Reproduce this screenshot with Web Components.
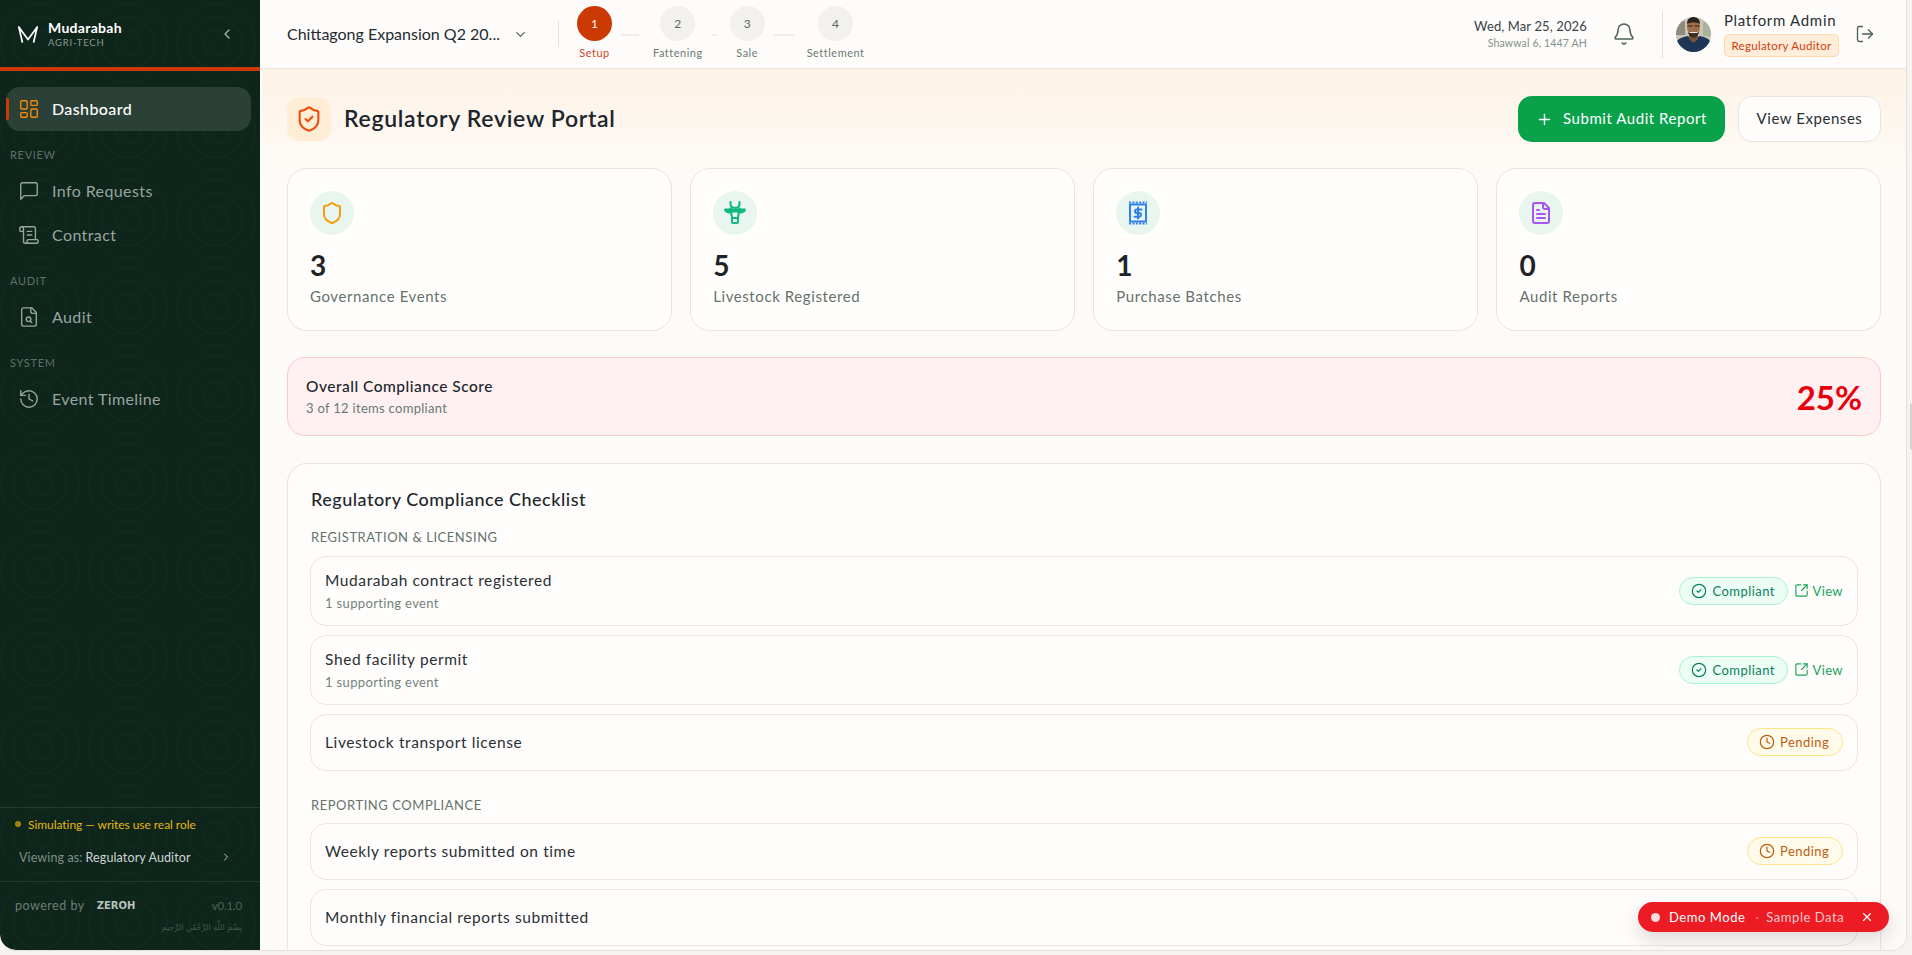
<!DOCTYPE html>
<html lang="en">
<head>
<meta charset="utf-8">
<title>Regulatory Review Portal</title>
<style>
  html, body { margin: 0; height: 100%; overflow: hidden; }
  body {
    background: #f4f3ef;
    font-family: "Lato", "Noto Sans", sans-serif;
    color: #1e2329;
  }
</style>
</head>
<body>
<app-shell>
  <side-bar slot="side"></side-bar>
  <top-bar slot="top"></top-bar>
  <page-head></page-head>
  <stat-row>
    <stat-card icon="shield" tone="#f59e0b" value="3">Governance Events</stat-card>
    <stat-card icon="cow" tone="#10b981" value="5">Livestock Registered</stat-card>
    <stat-card icon="receipt" tone="#2f80ed" value="1">Purchase Batches</stat-card>
    <stat-card icon="file-text" tone="#a855f7" value="0">Audit Reports</stat-card>
  </stat-row>
  <score-card value="25%" sub="3 of 12 items compliant">Overall Compliance Score</score-card>
  <check-card heading="Regulatory Compliance Checklist">
    <check-section label="Registration &amp; Licensing">
      <check-item sub="1 supporting event" status="compliant" link>Mudarabah contract registered</check-item>
      <check-item sub="1 supporting event" status="compliant" link>Shed facility permit</check-item>
      <check-item status="pending">Livestock transport license</check-item>
    </check-section>
    <check-section label="Reporting Compliance" class="second">
      <check-item status="pending">Weekly reports submitted on time</check-item>
      <check-item>Monthly financial reports submitted</check-item>
    </check-section>
  </check-card>
  <demo-pill slot="over"></demo-pill>
</app-shell>
<edge-handle></edge-handle>

<script>
const ICONS = {
  dashboard: '<rect x="3" y="3" width="7" height="9" rx="1"/><rect x="14" y="3" width="7" height="5" rx="1"/><rect x="14" y="12" width="7" height="9" rx="1"/><rect x="3" y="16" width="7" height="5" rx="1"/>',
  message: '<path d="M21 15a2 2 0 0 1-2 2H7l-4 4V5a2 2 0 0 1 2-2h14a2 2 0 0 1 2 2z"/>',
  scroll: '<path d="M15 12h-5"/><path d="M15 8h-5"/><path d="M19 17V5a2 2 0 0 0-2-2H4"/><path d="M8 21h12a2 2 0 0 0 2-2v-1a1 1 0 0 0-1-1H11a1 1 0 0 0-1 1v1a2 2 0 1 1-4 0V5a2 2 0 1 0-4 0v2a1 1 0 0 0 1 1h3"/>',
  "file-search": '<path d="M15 2H6a2 2 0 0 0-2 2v16a2 2 0 0 0 2 2h12a2 2 0 0 0 2-2V7z"/><path d="M14 2v4a2 2 0 0 0 2 2h4"/><circle cx="11.500" cy="14.500" r="2.500"/><path d="M13.300 16.300 15 18"/>',
  history: '<path d="M3 12a9 9 0 1 0 9-9 9.750 9.750 0 0 0-6.740 2.740L3 8"/><path d="M3 3v5h5"/><path d="M12 7v5l4 2"/>',
  "chevron-left": '<path d="m15 18-6-6 6-6"/>',
  "chevron-right": '<path d="m9 18 6-6-6-6"/>',
  "chevron-down": '<path d="m6 9 6 6 6-6"/>',
  bell: '<path d="M10.268 21a2 2 0 0 0 3.464 0"/><path d="M3.262 15.326A1 1 0 0 0 4 17h16a1 1 0 0 0 .74-1.673C19.410 13.956 18 12.499 18 8A6 6 0 0 0 6 8c0 4.499-1.411 5.956-2.738 7.326"/>',
  logout: '<path d="M9 21H5a2 2 0 0 1-2-2V5a2 2 0 0 1 2-2h4"/><path d="m16 17 5-5-5-5"/><path d="M21 12H9"/>',
  "shield-check": '<path d="M20 13c0 5-3.500 7.500-7.660 8.950a1 1 0 0 1-.67-.01C7.500 20.500 4 18 4 13V6a1 1 0 0 1 1-1c2 0 4.500-1.200 6.240-2.720a1.170 1.170 0 0 1 1.520 0C14.510 3.810 17 5 19 5a1 1 0 0 1 1 1z"/><path d="m9 12 2 2 4-4"/>',
  shield: '<path d="M20 13c0 5-3.500 7.500-7.660 8.950a1 1 0 0 1-.67-.01C7.500 20.500 4 18 4 13V6a1 1 0 0 1 1-1c2 0 4.500-1.200 6.240-2.720a1.170 1.170 0 0 1 1.520 0C14.510 3.810 17 5 19 5a1 1 0 0 1 1 1z"/>',
  cow: '<path d="M7.500 1c-.4 3.200.8 5.200 3 5.700h3c2.200-.5 3.400-2.500 3-5.700"/><path d="M8 8.500H2c.6 2.300 2.800 3.200 6 3z" fill="currentColor"/><path d="M16 8.500h6c-.6 2.300-2.800 3.200-6 3z" fill="currentColor"/><path d="M7.500 7.500 9 16.500v4a1.500 1.500 0 0 0 1.500 1.500h3a1.500 1.500 0 0 0 1.500-1.500v-4l1.500-9"/><path d="M9 17h6"/><path d="M8.500 9.500h7" stroke-width="4"/>',
  receipt: '<rect x="4" y="3.500" width="16" height="17"/><path d="M3 1.500h18M3 22.500h18" stroke-dasharray="2 1.400" stroke-linecap="butt"/><path d="M15.500 8.500h-4.700a1.800 1.800 0 0 0 0 3.600h2.400a1.800 1.800 0 0 1 0 3.600H8.500"/><path d="M12 6.500v11"/>',
  "file-text": '<path d="M15 2H6a2 2 0 0 0-2 2v16a2 2 0 0 0 2 2h12a2 2 0 0 0 2-2V7Z"/><path d="M14 2v4a2 2 0 0 0 2 2h4"/><path d="M10 9H8"/><path d="M16 13H8"/><path d="M16 17H8"/>',
  "circle-check": '<circle cx="12" cy="12" r="10"/><path d="m9 12 2 2 4-4"/>',
  clock: '<circle cx="12" cy="12" r="10"/><path d="M12 6v6l4 2"/>',
  external: '<path d="M21 13v6a2 2 0 0 1-2 2H5a2 2 0 0 1-2-2V5a2 2 0 0 1 2-2h6"/><path d="m21 3-9 9"/><path d="M15 3h6v6"/>',
  plus: '<path d="M5 12h14"/><path d="M12 5v14"/>',
  x: '<path d="M18 6 6 18"/><path d="m6 6 12 12"/>',
};

class UiIcon extends HTMLElement {
  connectedCallback() {
    if (this.shadowRoot) return;
    const size = this.getAttribute("size") || 18;
    const stroke = this.getAttribute("stroke") || 2;
    this.attachShadow({ mode: "open" }).innerHTML = `
      <style>:host { display: inline-flex; flex: none; width: ${size}px; height: ${size}px; }</style>
      <svg xmlns="http://www.w3.org/2000/svg" width="${size}" height="${size}" viewBox="0 0 24 24" fill="none"
        stroke="currentColor" stroke-width="${stroke}" stroke-linecap="round" stroke-linejoin="round">${ICONS[this.getAttribute("name")]}</svg>`;
  }
}

class AppShell extends HTMLElement {
  static get style() {
    return `
    :host {
      display: flex;
      position: relative;
      width: 1907px;
      height: 951px;
      box-sizing: border-box;
      border-right: 1px solid #e4e1da;
      border-bottom: 1px solid #e4e1da;
      border-radius: 0 0 16px 16px;
      overflow: hidden;
      background: #fdfbf8;
    }
    .main { flex: 1; min-width: 0; display: flex; flex-direction: column; }
    .content {
      flex: 1;
      min-height: 0;
      overflow: hidden;
      display: flex;
      flex-direction: column;
      padding: 27px 25px 0 25px;
      background: linear-gradient(#fef3e6 0, #fdf7f0 60px, #fdfbf8 110px);
    }
    `;
  }

  connectedCallback() {
    this.attachShadow({ mode: "open" }).innerHTML = `
    <style>${AppShell.style}</style>
    <slot name="side"></slot>
    <div class="main">
      <slot name="top"></slot>
      <div class="content"><slot></slot></div>
    </div>
    <slot name="over"></slot>`;
  }
}

// faint grab handle on the window edge, outside the app frame
class EdgeHandle extends HTMLElement {
  connectedCallback() {
    this.attachShadow({ mode: "open" }).innerHTML = `
    <style>:host { position: fixed; right: 0; top: 403px; width: 2px; height: 47px; background: #d3d2cd; border-radius: 2px 0 0 2px; }</style>`;
  }
}

const PATTERN = "data:image/svg+xml," + encodeURIComponent(
  `<svg xmlns="http://www.w3.org/2000/svg" width="88" height="88"><g fill="none" stroke="#fff" stroke-opacity=".022"><circle cx="40" cy="43" r="39.500"/><circle cx="40" cy="43" r="26.500"/><circle cx="40" cy="43" r="13"/><path d="M12 71 68 15"/></g></svg>`
);

class SideBar extends HTMLElement {
  static get style() {
    return `
    :host {
      display: flex;
      flex-direction: column;
      flex: none;
      box-sizing: border-box;
      width: 262px;
      height: 100%;
      border-right: 2px solid #fdfbf8;
      border-bottom-left-radius: 16px;
      overflow: hidden;
      background: #0e251b url('${PATTERN}');
      color: #fff;
    }
    .brand {
      height: 67px;
      display: flex;
      align-items: center;
      padding: 0 25px 0 18px;
      box-sizing: border-box;
    }
    .brand svg { margin-right: 10px; margin-top: 2px; }
    .name { font-size: 14px; font-weight: 700; line-height: 18px; letter-spacing: .3px; }
    .tag { font-size: 9.500px; letter-spacing: .8px; line-height: 12px; color: #8b9c93; }
    .collapse { margin-left: auto; color: #a5b2ab; }
    .rule { height: 4px; background: #cb3a05; flex: none; }
    nav { padding: 16px 9px 0 6px; }
    .label {
      font-size: 11px;
      letter-spacing: .7px;
      color: #5f7067;
      line-height: 16px;
      padding: 15.500px 0 6.500px 4px;
    }
    .foot { margin-top: auto; font-size: 12px; }
    .sim { border-top: 1px solid #233a2f; height: 74px; box-sizing: border-box; padding: 6px 15px 0; }
    .warn { display: flex; align-items: center; gap: 7px; height: 20px; color: #e5b710; font-size: 12px; letter-spacing: -.05px; }
    .warn i { width: 6px; height: 6px; border-radius: 50%; background: #a3840e; }
    .role { display: flex; align-items: center; height: 20px; margin-top: 13px; padding: 0 2px 0 4px; color: #7f8f87; font-size: 12.500px; letter-spacing: .12px; }
    .role b { font-weight: 400; color: #cfd6d2; margin-left: 3px; }
    .role ui-icon { margin-left: auto; margin-right: 11px; color: #b7c1bb; }
    .power { border-top: 1px solid #233a2f; padding: 13px 18px 0 15px; height: 69px; box-sizing: border-box; color: #6d7d75; }
    .row { display: flex; align-items: center; height: 20px; font-size: 12.500px; letter-spacing: .5px; }
    .zeroh { margin-left: 12px; font-weight: 700; font-size: 10px; letter-spacing: 0; color: #b9c3bd; font-family: "DejaVu Sans", sans-serif; }
    .ver { margin-left: auto; color: #4d5f56; letter-spacing: -.2px; font-size: 11.500px; }
    .bis { direction: rtl; font-family: "DejaVu Sans", sans-serif; font-size: 8px; line-height: 14px; margin-top: 6px; color: #46574e; }
    `;
  }

  connectedCallback() {
    this.attachShadow({ mode: "open" }).innerHTML = `
    <style>${SideBar.style}</style>
    <div class="brand">
      <svg width="20" height="17" viewBox="0 0 20 17" fill="none" stroke="#fff" stroke-width="1.700" stroke-linejoin="round" stroke-linecap="round">
        <path d="M.8 1 10 13.500 19.200 1M.8 1l3.500 15M19.200 1l-3.500 15"/>
      </svg>
      <div>
        <div class="name">Mudarabah</div>
        <div class="tag">AGRI-TECH</div>
      </div>
      <ui-icon class="collapse" name="chevron-left" size="16"></ui-icon>
    </div>
    <div class="rule"></div>
    <nav>
      <nav-item icon="dashboard" active>Dashboard</nav-item>
      <div class="label">REVIEW</div>
      <nav-item icon="message">Info Requests</nav-item>
      <nav-item icon="scroll">Contract</nav-item>
      <div class="label">AUDIT</div>
      <nav-item icon="file-search">Audit</nav-item>
      <div class="label">SYSTEM</div>
      <nav-item icon="history">Event Timeline</nav-item>
    </nav>
    <div class="foot">
      <div class="sim">
        <div class="warn"><i></i>Simulating — writes use real role</div>
        <div class="role">Viewing as: <b>Regulatory Auditor</b><ui-icon name="chevron-right" size="12"></ui-icon></div>
      </div>
      <div class="power">
        <div class="row">powered by <span class="zeroh">ZEROH</span><span class="ver">v0.1.0</span></div>
        <div class="bis" lang="ar">بِسْمِ اللَّهِ الرَّحْمَٰنِ الرَّحِيمِ</div>
      </div>
    </div>`;
  }
}

class NavItem extends HTMLElement {
  static get style() {
    return `
    :host {
      display: flex;
      align-items: center;
      position: relative;
      height: 44px;
      gap: 12px;
      padding-left: 12px;
      border-radius: 14px;
      font-size: 16px;
      color: #97a59e;
      letter-spacing: .4px;
    }
    span { margin-top: -2px; }
    :host([active]) { background: #2b4036; color: #fff; font-weight: 500; }
    :host([active]) ui-icon { color: #f58a0b; }
    :host([active])::before {
      content: "";
      position: absolute;
      left: 0;
      top: 11px;
      width: 3px;
      height: 22px;
      border-radius: 0 2px 2px 0;
      background: #cb3a05;
    }
    `;
  }

  connectedCallback() {
    this.attachShadow({ mode: "open" }).innerHTML = `
    <style>${NavItem.style}</style>
    <ui-icon name="${this.getAttribute("icon")}" size="22" stroke="1.500"></ui-icon>
    <span><slot></slot></span>`;
  }
}

class TopBar extends HTMLElement {
  static get style() {
    return `
    :host {
      display: flex;
      align-items: center;
      flex: none;
      height: 69px;
      box-sizing: border-box;
      border-bottom: 1px solid #e9e5de;
      background: #fdfcfa;
      padding: 0 31px 0 25px;
    }
    .project {
      display: flex;
      align-items: center;
      flex: none;
      width: 271px;
      font-size: 16px;
      font-weight: 400;
      color: #262b30;
      white-space: nowrap;
    }
    .project span { margin-top: -2px; }
    .project ui-icon { margin-left: 13px; color: #57645d; }
    .sep { width: 1px; background: #e3e0d9; align-self: center; flex: none; }
    .steps { display: flex; align-self: flex-start; padding-left: 18px; padding-top: 6px; }
    .line { height: 2px; background: #f0eee9; margin: 28px 13px 0 9px; }
    .when { margin-left: auto; text-align: right; }
    .date { font-size: 13px; line-height: 18px; color: #3b4148; letter-spacing: .12px; }
    .hijri { font-size: 10.500px; line-height: 16px; color: #84918a; letter-spacing: .15px; }
    .bell { margin-left: 25px; color: #4f6057; }
    .user { display: flex; flex-direction: column; align-items: flex-start; align-self: flex-start; margin-left: 13px; padding-top: 9.500px; }
    .who { font-size: 15px; line-height: 20px; letter-spacing: .7px; font-weight: 400; color: #2a2f35; }
    .badge {
      font-size: 11.500px;
      line-height: 21px;
      padding: 0 6.500px;
      margin-top: 4.500px;
      letter-spacing: .3px;
      color: #cf3d0e;
      background: #ffedd9;
      border: 1px solid #fed7aa;
      border-radius: 5px;
    }
    .logout { margin-left: 16px; color: #4f6057; }
    .avatar { margin-left: 13px; flex: none; }
    `;
  }

  connectedCallback() {
    this.attachShadow({ mode: "open" }).innerHTML = `
    <style>${TopBar.style}</style>
    <div class="project"><span>Chittagong Expansion Q2 20...</span><ui-icon name="chevron-down" size="15"></ui-icon></div>
    <div class="sep" style="height:26px"></div>
    <div class="steps">
      <work-step n="1" active>Setup</work-step><div class="line" style="width:18px;margin-right:14px"></div>
      <work-step n="2">Fattening</work-step><div class="line" style="width:5px"></div>
      <work-step n="3">Sale</work-step><div class="line" style="width:20px"></div>
      <work-step n="4">Settlement</work-step>
    </div>
    <div class="when">
      <div class="date">Wed, Mar 25, 2026</div>
      <div class="hijri">Shawwal 6, 1447 AH</div>
    </div>
    <ui-icon class="bell" name="bell" size="24" stroke="1.500"></ui-icon>
    <div class="sep" style="height:47px;margin-left:26px"></div>
    <svg class="avatar" width="35" height="35" viewBox="0 0 35 35">
      <defs><clipPath id="av"><circle cx="17.500" cy="17.500" r="17.500"/></clipPath></defs>
      <g clip-path="url(#av)">
        <rect width="35" height="35" fill="#c9c4b4"/>
        <rect x="0" y="4" width="9" height="14" fill="#8f8a7c"/>
        <rect x="27" y="5" width="8" height="14" fill="#a9b39d"/>
        <path d="M0 35V25c3-4 8-5 11-6l6.500 3 6.500-3c4 1 8 2 11 6v10z" fill="#1d3657"/>
        <path d="M13 17h9v5l-4.500 4-4.500-4z" fill="#7c543b"/>
        <ellipse cx="17.500" cy="10" rx="6.500" ry="8.500" fill="#a06f4e"/>
        <path d="M11 7c0-5 3-7 6.500-7S24 2 24 7c-3-2-10-2-13 0z" fill="#2a2320"/>
        <path d="M12 15c1 4 3 5.500 5.500 5.500S22 19 23 15c-2 1.500-9 1.500-11 0z" fill="#3a2c25"/>
        <path d="M13.500 15.500h8" stroke="#f3e9df" stroke-width="1.200"/>
        <path d="M11.500 9h5m2 0h5" stroke="#29211d" stroke-width="1.100"/>
      </g>
    </svg>
    <div class="user">
      <div class="who">Platform Admin</div>
      <div class="badge">Regulatory Auditor</div>
    </div>
    <ui-icon class="logout" name="logout" size="20" stroke="1.600"></ui-icon>`;
  }
}

class WorkStep extends HTMLElement {
  static get style() {
    return `
    :host { display: flex; flex-direction: column; align-items: center; flex: none; min-width: 35px; }
    .dot {
      width: 35px;
      height: 35px;
      border-radius: 50%;
      display: flex;
      align-items: center;
      justify-content: center;
      background: #f2f1ed;
      color: #59665f;
      font-size: 12px;
    }
    .text { font-size: 11px; line-height: 14px; margin-top: 5px; color: #6c7a73; letter-spacing: .5px; }
    :host([active]) .dot { background: #cb3a05; color: #fff; }
    :host([active]) .text { color: #d0451b; }
    `;
  }

  connectedCallback() {
    this.attachShadow({ mode: "open" }).innerHTML = `
    <style>${WorkStep.style}</style>
    <div class="dot">${this.getAttribute("n")}</div>
    <div class="text"><slot></slot></div>`;
  }
}

class PageHead extends HTMLElement {
  static get style() {
    return `
    :host { display: flex; align-items: center; flex: none; height: 46px; margin-bottom: 26px; }
    .mark {
      width: 44px;
      height: 44px;
      border-radius: 12px;
      display: flex;
      align-items: center;
      justify-content: center;
      background: #ffedd5;
      color: #ea4f0c;
    }
    h1 { margin: -2px 0 0 13px; font-size: 23px; font-weight: 600; letter-spacing: .7px; color: #20252b; }
    .actions { margin-left: auto; display: flex; gap: 13px; }
    button {
      appearance: none;
      display: flex;
      align-items: center;
      height: 46px;
      box-sizing: border-box;
      border-radius: 14px;
      font: inherit;
      font-size: 15px;
      letter-spacing: .55px;
    }
    button span { margin-top: -2px; }
    .primary { width: 207px; padding: 0 0 0 18px; gap: 10px; border: 0; background: #0aa14b; color: #fff; font-weight: 400; }
    .ghost { width: 143px; justify-content: center; border: 1px solid #e9e5de; background: #fffefc; color: #2a2f35; font-weight: 400; }
    `;
  }

  connectedCallback() {
    this.attachShadow({ mode: "open" }).innerHTML = `
    <style>${PageHead.style}</style>
    <div class="mark"><ui-icon name="shield-check" size="28" stroke="1.800"></ui-icon></div>
    <h1>Regulatory Review Portal</h1>
    <div class="actions">
      <button class="primary"><ui-icon name="plus" size="17"></ui-icon><span>Submit Audit Report</span></button>
      <button class="ghost"><span>View Expenses</span></button>
    </div>`;
  }
}

class StatRow extends HTMLElement {
  connectedCallback() {
    this.attachShadow({ mode: "open" }).innerHTML = `
    <style>:host { display: grid; grid-template-columns: repeat(4, 1fr); gap: 18.500px; flex: none; margin-bottom: 26px; }</style>
    <slot></slot>`;
  }
}

class StatCard extends HTMLElement {
  static get style() {
    return `
    :host {
      display: block;
      box-sizing: border-box;
      height: 163px;
      padding: 22px;
      border: 1px solid #e9e5de;
      border-radius: 20px;
      background: #fffefc;
    }
    .mark {
      width: 44px;
      height: 44px;
      border-radius: 50%;
      display: flex;
      align-items: center;
      justify-content: center;
      background: #e9f5ef;
    }
    .value { font-size: 28px; line-height: 36px; font-weight: 700; margin-top: 12px; color: #1e2329; }
    .label { font-size: 15px; line-height: 22px; margin-top: 2px; color: #65726b; letter-spacing: .6px; }
    `;
  }

  connectedCallback() {
    this.attachShadow({ mode: "open" }).innerHTML = `
    <style>${StatCard.style}</style>
    <div class="mark" style="color:${this.getAttribute("tone")}"><ui-icon name="${this.getAttribute("icon")}" size="24"></ui-icon></div>
    <div class="value">${this.getAttribute("value")}</div>
    <div class="label"><slot></slot></div>`;
  }
}

class ScoreCard extends HTMLElement {
  static get style() {
    return `
    :host {
      display: flex;
      align-items: center;
      flex: none;
      box-sizing: border-box;
      height: 79px;
      padding: 0 18px;
      margin-bottom: 27px;
      border: 1px solid #fecaca;
      border-radius: 18px;
      background: #fff1f2;
    }
    .title { font-size: 15.500px; line-height: 20px; font-weight: 500; letter-spacing: .5px; color: #20252b; }
    .sub { font-size: 13px; line-height: 18px; margin-top: 3px; color: #6b7871; letter-spacing: .3px; }
    .value { margin-left: auto; font-size: 33px; font-weight: 700; color: #e7000b; }
    `;
  }

  connectedCallback() {
    this.attachShadow({ mode: "open" }).innerHTML = `
    <style>${ScoreCard.style}</style>
    <div>
      <div class="title"><slot></slot></div>
      <div class="sub">${this.getAttribute("sub")}</div>
    </div>
    <div class="value">${this.getAttribute("value")}</div>`;
  }
}

class CheckCard extends HTMLElement {
  static get style() {
    return `
    :host {
      display: block;
      flex: none;
      box-sizing: border-box;
      padding: 23px 22px;
      height: 560px;
      border: 1px solid #e9e5de;
      border-radius: 20px;
      background: #fefdfb;
    }
    h2 { margin: 0 0 0 1px; font-size: 18px; line-height: 25px; font-weight: 500; letter-spacing: .5px; color: #22272d; }
    `;
  }

  connectedCallback() {
    this.attachShadow({ mode: "open" }).innerHTML = `
    <style>${CheckCard.style}</style>
    <h2>${this.getAttribute("heading")}</h2>
    <slot></slot>`;
  }
}

class CheckSection extends HTMLElement {
  static get style() {
    return `
    :host { display: flex; flex-direction: column; gap: 9px; margin-top: 16px; }
    :host(.second) { margin-top: 25px; }
    .label { font-size: 13px; line-height: 18px; letter-spacing: .55px; text-transform: uppercase; color: #64736b; margin: 0 0 1px 1px; }
    :host(.second) .label { margin-bottom: 0; }
    `;
  }

  connectedCallback() {
    this.attachShadow({ mode: "open" }).innerHTML = `
    <style>${CheckSection.style}</style>
    <div class="label">${this.getAttribute("label")}</div>
    <slot></slot>`;
  }
}

class CheckItem extends HTMLElement {
  static get style() {
    return `
    :host {
      display: flex;
      align-items: center;
      box-sizing: border-box;
      min-height: 57px;
      padding: 12px 14px;
      border: 1px solid #ebe7e0;
      border-radius: 16px;
      background: #fefdfb;
    }
    .copy { transform: translateY(-1px); }
    .title { font-size: 15.500px; line-height: 24px; letter-spacing: .6px; color: #2a2f35; font-weight: 400; }
    .sub { font-size: 13px; line-height: 18px; margin-top: 2px; letter-spacing: .35px; color: #74827a; }
    .right { margin-left: auto; margin-top: -1px; display: flex; align-items: center; gap: 6px; }
    .view { display: flex; align-items: center; gap: 3px; font-size: 13px; letter-spacing: .4px; color: #17a35a; }
    `;
  }

  connectedCallback() {
    const sub = this.getAttribute("sub");
    const status = this.getAttribute("status");
    this.attachShadow({ mode: "open" }).innerHTML = `
    <style>${CheckItem.style}</style>
    <div class="copy">
      <div class="title"><slot></slot></div>
      ${sub ? `<div class="sub">${sub}</div>` : ""}
    </div>
    <div class="right">
      ${status ? `<status-pill status="${status}"></status-pill>` : ""}
      ${this.hasAttribute("link") ? `<span class="view"><ui-icon name="external" size="15" stroke="1.800"></ui-icon>View</span>` : ""}
    </div>`;
  }
}

class StatusPill extends HTMLElement {
  static get style() {
    return `
    :host {
      display: inline-flex;
      align-items: center;
      gap: 5px;
      height: 28px;
      box-sizing: border-box;
      padding: 0 11px;
      border-radius: 14px;
      font-size: 13px;
      letter-spacing: .45px;
      border: 1px solid;
    }
    :host([status="compliant"]) { width: 109px; color: #0e7f5c; background: #ecfdf5; border-color: #a7f3d0; }
    :host([status="pending"]) { width: 96px; color: #bd5b10; background: #fffbeb; border-color: #fde68a; }
    `;
  }

  connectedCallback() {
    const compliant = this.getAttribute("status") === "compliant";
    this.attachShadow({ mode: "open" }).innerHTML = `
    <style>${StatusPill.style}</style>
    <ui-icon name="${compliant ? "circle-check" : "clock"}" size="16" stroke="1.800"></ui-icon>
    ${compliant ? "Compliant" : "Pending"}`;
  }
}

class DemoPill extends HTMLElement {
  static get style() {
    return `
    :host {
      position: absolute;
      left: 1638px;
      top: 902px;
      width: 251px;
      height: 30px;
      box-sizing: border-box;
      display: flex;
      align-items: center;
      padding: 0 15px 0 13px;
      border-radius: 15px;
      background: #ec1b24;
      color: #fff;
      font-size: 13px;
      letter-spacing: .55px;
      box-shadow: 0 8px 18px rgba(60, 40, 40, .16);
    }
    i { width: 9px; height: 9px; border-radius: 50%; background: #fcdcdc; margin-right: 9px; }
    .dim { color: #fdc9cb; }
    .sep { margin: 0 7px 0 10px; color: #f47a7f; }
    ui-icon { margin-left: auto; }
    `;
  }

  connectedCallback() {
    this.attachShadow({ mode: "open" }).innerHTML = `
    <style>${DemoPill.style}</style>
    <i></i><span>Demo Mode</span><span class="sep">·</span><span class="dim">Sample Data</span>
    <ui-icon name="x" size="14"></ui-icon>`;
  }
}

const ELEMENTS = {
  "ui-icon": UiIcon,
  "app-shell": AppShell,
  "edge-handle": EdgeHandle,
  "side-bar": SideBar,
  "nav-item": NavItem,
  "top-bar": TopBar,
  "work-step": WorkStep,
  "page-head": PageHead,
  "stat-row": StatRow,
  "stat-card": StatCard,
  "score-card": ScoreCard,
  "check-card": CheckCard,
  "check-section": CheckSection,
  "check-item": CheckItem,
  "status-pill": StatusPill,
  "demo-pill": DemoPill,
};
for (const [name, cls] of Object.entries(ELEMENTS)) {
  customElements.define(name, cls);
}
</script>
</body>
</html>
